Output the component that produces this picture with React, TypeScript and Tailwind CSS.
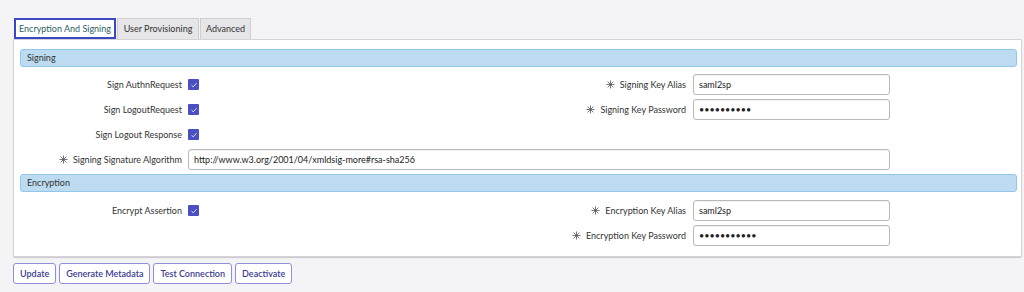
import React from "react";

const Star = () => (
  <svg width="9" height="9" viewBox="0 0 10 10" className="inline-block mr-[5px] mb-[1px]" stroke="#555" strokeWidth="0.9">
    <line x1="5" y1="0.5" x2="5" y2="9.5" />
    <line x1="0.5" y1="5" x2="9.5" y2="5" />
    <line x1="1.8" y1="1.8" x2="8.2" y2="8.2" />
    <line x1="8.2" y1="1.8" x2="1.8" y2="8.2" />
  </svg>
);

const Check = () => (
  <span className="inline-flex w-[11px] h-[11px] bg-[#4b4fc2] rounded-[1px] items-center justify-center">
    <svg width="8" height="8" viewBox="0 0 8 8" fill="none" stroke="#dfe0ff" strokeWidth="1">
      <path d="M1.5 4.2 L3.2 5.8 L6.6 2.2" />
    </svg>
  </span>
);

const Input = ({ value, password = false, wide = false }: { value: string; password?: boolean; wide?: boolean }) => (
  <input
    readOnly
    type={password ? "password" : "text"}
    value={value}
    className={`${wide ? "w-[702px]" : "w-[197px]"} h-[21px] border border-[#b9b9b9] rounded-[3px] px-[5px] text-[9px] text-[#222] bg-white outline-none shadow-[inset_0_1px_1px_rgba(0,0,0,0.06)]`}
    style={{ fontFamily: "Lato, sans-serif" }}
  />
);

const Row = ({
  left,
  leftField,
  right,
  rightField,
}: {
  left?: React.ReactNode;
  leftField?: React.ReactNode;
  right?: React.ReactNode;
  rightField?: React.ReactNode;
}) => (
  <div className="flex items-center h-[25px] pl-[6px]">
    <div className="w-[162px] text-right whitespace-nowrap">{left}</div>
    <div className="w-[250px] ml-[6px] flex items-center">{leftField}</div>
    <div className="w-[248px] text-right whitespace-nowrap">{right}</div>
    <div className="ml-[7px] flex items-center">{rightField}</div>
  </div>
);

const Header = ({ title }: { title: string }) => (
  <div className="ml-[6px] mr-[4px] h-[18px] bg-[#bddcf1] border border-[#93c6e9] rounded-[3px] flex items-center pl-[6px] text-[9px] text-[#333]">
    {title}
  </div>
);

export default function App() {
  return (
    <div
      className="w-[1024px] h-[292px] bg-[#f4f4f6] pt-[18px] pl-[13px] pr-[2px] text-[9px] text-[#333]"
      style={{ fontFamily: "Lato, sans-serif" }}
    >
      <div className="flex h-[21px] pl-[1px]">
        <div className="w-[102px] h-[21px] bg-white border-2 border-[#3b48c4] flex items-center justify-center text-[#2f5f66] whitespace-nowrap">
          Encryption And Signing
        </div>
        <div className="ml-[1px] w-[82px] h-[21px] bg-[#e6e6e8] border border-[#cfcfd2] border-b-0 flex items-center justify-center text-[#333] whitespace-nowrap">
          User Provisioning
        </div>
        <div className="ml-[1px] w-[51px] h-[21px] bg-[#e6e6e8] border border-[#cfcfd2] border-b-0 flex items-center justify-center text-[#333] whitespace-nowrap">
          Advanced
        </div>
      </div>
      <div className="bg-white border border-[#d4d4d6] shadow-[0_1px_1px_rgba(0,0,0,0.18)] rounded-b-[2px] pt-[9px] pb-[8px] h-[218px]">
        <Header title="Signing" />
        <div className="mt-[5px]">
          <Row
            left="Sign AuthnRequest"
            leftField={<Check />}
            right={<><Star />Signing Key Alias</>}
            rightField={<Input value="saml2sp" />}
          />
          <Row
            left="Sign LogoutRequest"
            leftField={<Check />}
            right={<><Star />Signing Key Password</>}
            rightField={<Input value="aaaaaaaaaa" password />}
          />
          <Row left="Sign Logout Response" leftField={<Check />} />
          <div className="flex items-center h-[25px] pl-[6px]">
            <div className="w-[162px] text-right whitespace-nowrap"><Star />Signing Signature Algorithm</div>
            <div className="ml-[6px]">
              <Input value="http://www.w3.org/2001/04/xmldsig-more#rsa-sha256" wide />
            </div>
          </div>
        </div>
        <div className="mt-[2px]">
          <Header title="Encryption" />
        </div>
        <div className="mt-[6px]">
          <Row
            left="Encrypt Assertion"
            leftField={<Check />}
            right={<><Star />Encryption Key Alias</>}
            rightField={<Input value="saml2sp" />}
          />
          <Row
            right={<><Star />Encryption Key Password</>}
            rightField={<Input value="aaaaaaaaaaa" password />}
          />
        </div>
      </div>
      <div className="flex gap-[3px] mt-[6px]">
        {["Update", "Generate Metadata", "Test Connection", "Deactivate"].map((b) => (
          <button
            key={b}
            className="h-[21px] px-[6px] bg-white border border-[#8f8fdc] rounded-[3px] text-[9px] font-semibold text-[#3b3d8f]"
            style={{ fontFamily: "Lato, sans-serif" }}
          >
            {b}
          </button>
        ))}
      </div>
    </div>
  );
}
